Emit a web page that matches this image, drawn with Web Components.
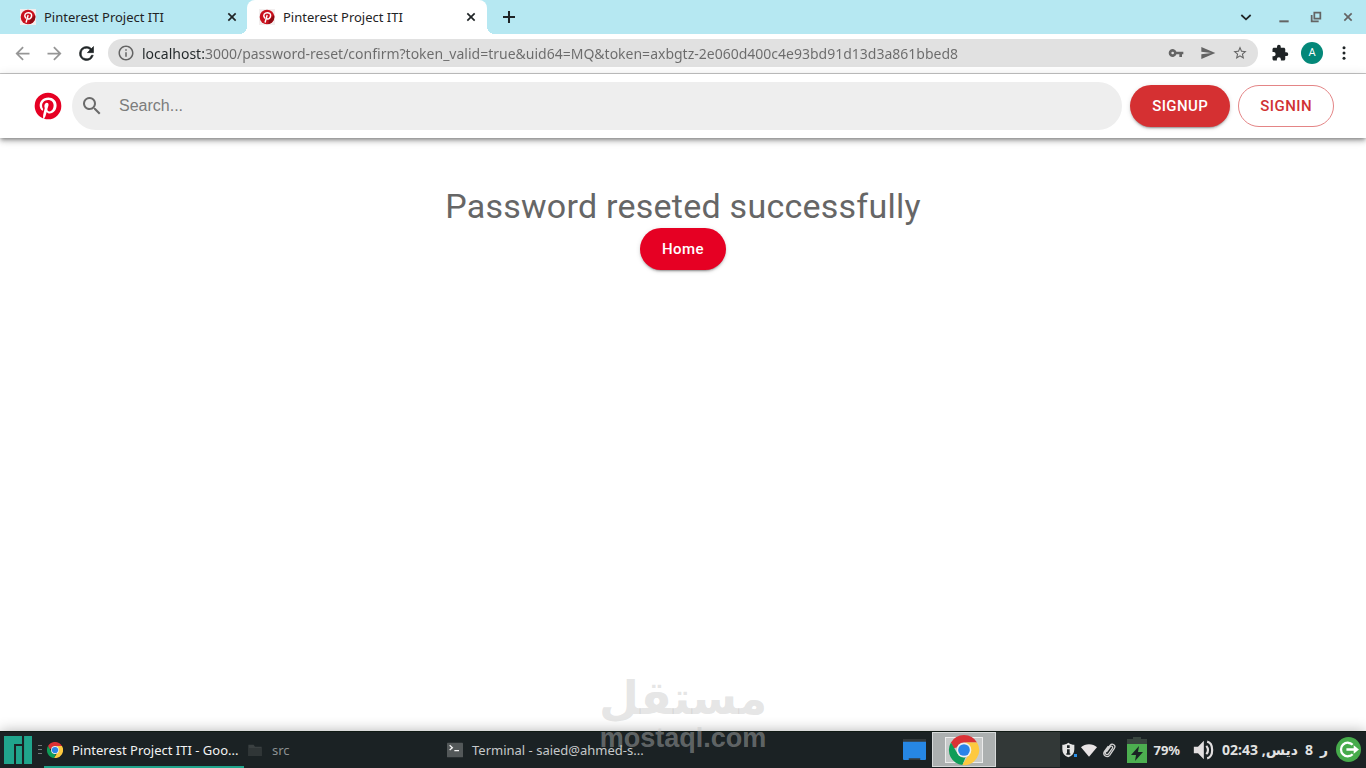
<!DOCTYPE html>
<html lang="en">
<head>
<meta charset="utf-8">
<title>Pinterest Project ITI</title>
<style>
html, body { height: 100%; margin: 0; }
body { font-family: "Noto Sans", "DejaVu Sans", sans-serif; font-size: 13px; color: #1f2426; background: #fff; overflow: hidden; }
</style>
</head>
<body>
<desktop-screen></desktop-screen>
<script>
const pinterestPath = 'M9.04 21.54c.96.29 1.93.46 2.96.46a10 10 0 0 0 10-10A10 10 0 0 0 12 2 10 10 0 0 0 2 12c0 4.25 2.67 7.9 6.44 9.34-.09-.78-.18-2.07 0-2.96l1.15-4.94s-.29-.58-.29-1.5c0-1.38.86-2.41 1.84-2.41.86 0 1.26.63 1.26 1.44 0 .86-.57 2.09-.86 3.27-.17.98.52 1.84 1.52 1.84 1.78 0 3.16-1.9 3.16-4.58 0-2.4-1.72-4.04-4.19-4.04-2.82 0-4.48 2.1-4.48 4.31 0 .86.28 1.73.74 2.3.09.06.09.14.06.29l-.29 1.09c0 .17-.11.23-.28.11-1.28-.56-2.02-2.38-2.02-3.85 0-3.16 2.24-6.03 6.56-6.03 3.44 0 6.12 2.47 6.12 5.75 0 3.44-2.13 6.2-5.18 6.2-.97 0-1.92-.52-2.26-1.13l-.67 2.37c-.23.86-.86 2.01-1.29 2.7v-.03z';
const chromeArt = '<path fill="#db3236" d="M3.3 7A10 10 0 0 1 20.7 7H12a5 5 0 0 0-4.6 3.1L5 11z"/><path fill="#0f9d58" d="M3.3 7l4.4 7.5A5 5 0 0 0 13 16.9L11 22A10 10 0 0 1 3.3 7z"/><path fill="#fdc940" d="M20.7 7A10 10 0 0 1 10.9 22l5.4-9A5 5 0 0 0 12 7z"/><circle cx="12" cy="12" r="4.9" fill="#f1f1f1"/><circle cx="12" cy="12" r="3.9" fill="#2a84e8"/>';
const icons = {
  pinterest: `<path fill="currentColor" d="${pinterestPath}"/>`,
  favicon: '<rect width="24" height="24" fill="#f2eeee"/><circle cx="12" cy="12" r="11" fill="#c9111d"/><path d="M14 22.8A11 11 0 0 0 22.6 9L15 17z" fill="#8f0b13"/><path d="M9.3 19.5l2.7-9.6M8.4 13.3C5.2 8.5 8.8 5.5 12.4 5.5c3.4 0 5.2 2.2 5 4.7-.3 3.2-2.7 5-4.7 4.7-1-.1-1.6-.6-1.9-1.2" fill="none" stroke="#fff" stroke-width="2.2" stroke-linecap="round"/>',
  x: '<path d="M6.5 6.5l11 11m0-11l-11 11" stroke="currentColor" stroke-width="2.5"/>',
  plus: '<path d="M12 4v16M4 12h16" stroke="currentColor" stroke-width="2.7"/>',
  chevron: '<path d="M5 9l7 6.5L19 9" fill="none" stroke="currentColor" stroke-width="2.6"/>',
  minimize: '<path d="M5 18.5h14" stroke="currentColor" stroke-width="3"/>',
  restore: '<path d="M9.5 5.5h9v9h-9zM5.5 9v9.500H16" fill="none" stroke="currentColor" stroke-width="2.6"/>',
  back: '<path d="M20 11H7.830l5.590-5.590L12 4l-8 8 8 8 1.410-1.410L7.830 13H20z" fill="currentColor"/>',
  forward: '<path d="M4 11h12.170l-5.590-5.590L12 4l8 8-8 8-1.410-1.410L16.170 13H4z" fill="currentColor"/>',
  reload: '<path d="M17.65 6.35A7.95 7.95 0 0 0 12 4a8 8 0 1 0 7.73 10h-2.080A6 6 0 1 1 12 6c1.660 0 3.140.690 4.220 1.780L13 11h7V4z" fill="currentColor" stroke="currentColor" stroke-width=".7"/>',
  info: '<path fill="currentColor" d="M11 7h2v2h-2zm0 4h2v6h-2zm1-9C6.480 2 2 6.480 2 12s4.480 10 10 10 10-4.480 10-10S17.520 2 12 2zm0 18c-4.410 0-8-3.590-8-8s3.590-8 8-8 8 3.590 8 8-3.590 8-8 8z"/>',
  key: '<path fill="currentColor" fill-rule="evenodd" d="M12.650 10A6 6 0 1 0 12.650 14H17v4h4v-4h2v-4zM7 14a2 2 0 1 1 0-4 2 2 0 0 1 0 4z"/>',
  send: '<path fill="currentColor" d="M2 21l21-9L2 3v7l15 2-15 2z"/>',
  star: '<path fill="currentColor" fill-rule="evenodd" d="M22 9.240l-7.190-.620L12 2 9.190 8.630 2 9.240l5.460 4.730L5.820 21 12 17.270 18.180 21l-1.630-7.030zM12 15.400l-3.760 2.270 1-4.280-3.320-2.880 4.380-.380L12 6.100l1.710 4.040 4.380.380-3.320 2.880 1 4.280z"/>',
  puzzle: '<path fill="currentColor" d="M20.500 11H19V7c0-1.100-.9-2-2-2h-4V3.500a2.500 2.500 0 0 0-5 0V5H4c-1.100 0-2 .9-2 2v3.800h1.500a2.700 2.700 0 0 1 0 5.400H2V20c0 1.100.9 2 2 2h3.800v-1.500a2.700 2.700 0 0 1 5.400 0V22H17c1.100 0 2-.9 2-2v-4h1.500a2.500 2.500 0 0 0 0-5z"/>',
  dots: '<g fill="currentColor"><circle cx="12" cy="5" r="2"/><circle cx="12" cy="12" r="2"/><circle cx="12" cy="19" r="2"/></g>',
  search: '<path fill="currentColor" d="M15.500 14h-.790l-.280-.270A6.500 6.500 0 1 0 13.730 14.430l.270.280v.790l5 4.990L20.490 19zm-6 0a4.500 4.500 0 1 1 0-9 4.500 4.500 0 0 1 0 9z"/>',
  manjaro: '<path fill="#20a58c" d="M0 0h15.400v6.900H8.600V24H0zM10.300 8.600h5.100V24h-5.100zM17.200 0H24v24h-6.800z"/>',
  chrome: chromeArt,
  folder: '<path fill="#3a4041" d="M2 4h8l2 3h10v14H2z"/><path fill="#303637" d="M2 9h20v12H2z"/>',
  terminal: '<rect y="1" width="24" height="22" rx="1" fill="#535859"/><path d="M4 5l4 3.500L4 12M11 13h7" fill="none" stroke="#f2f2f2" stroke-width="2"/>',
  screen: '<rect y="1" width="24" height="22" rx="1" fill="#2687e5"/><path fill="#343a3c" d="M0 1h24v3H0zM6 21h12v2H6z"/>',
  shield: '<path fill="#e4e4e4" d="M11 1c3 2 6 3 9 3v7c0 6-3 10-9 12-6-2-9-6-9-12V4c3 0 6-1 9-3z"/><path fill="#1b2224" d="M9 5h4v4H9zm0 6h4v6h1v2H8v-2h1z"/>',
  wifi: '<path fill="#e8e4e5" d="M12 22L0 8C6 2 18 2 24 8z"/>',
  clip: '<path d="M8 15l6-8c2-2 4.500 0 3 2.500L11 18c-2 2.500-6-.5-4-3.500L13.500 5C17 1 23 5 20 9.500L13 20c-4 4.500-11 0-8-5.500L11 6" fill="none" stroke="#d4d4d4" stroke-width="1.900"/>',
  battery: '<path fill="#39463f" d="M6 0h8v2h6v5H0V2h6z"/><path fill="#4caf50" d="M0 7h20v19H0z"/><path fill="#1b2224" d="M12 9l-8 9h5l-1 6 8-9h-5z"/>',
  volume: '<path fill="#e2dfe0" d="M1 8h5l7-7v22l-7-7H1z"/><path d="M16 7q4 5 0 10M17 2c8 2 8 18 0 20" fill="none" stroke="#e2dfe0" stroke-width="2.600"/>',
  logout: '<circle cx="12" cy="12" r="12" fill="#46ab4b"/><path d="M16 7.500A6.500 6.500 0 1 0 16 16.500M10 12h10" fill="none" stroke="#fff" stroke-width="2.200"/><path fill="#fff" d="M17 8l5 4-5 4z"/>'
};

function define(name, markup, setup) {
  const template = document.createElement('template');
  template.innerHTML = markup;
  customElements.define(name, class extends HTMLElement {
    constructor() {
      super();
      this.attachShadow({ mode: 'open' }).append(template.content.cloneNode(true));
    }
    connectedCallback() { if (setup) setup(this, this.shadowRoot); }
  });
}

/* Inline icon: name picks the drawing, view overrides the 24-unit box. */
define('ui-icon', `<style>
:host { display: block; flex: none; width: 16px; height: 16px; }
svg { display: block; width: 100%; height: 100%; }
</style><svg viewBox="0 0 24 24" aria-hidden="true"></svg>`, (host, root) => {
  const svg = root.querySelector('svg');
  if (host.getAttribute('view')) svg.setAttribute('viewBox', host.getAttribute('view'));
  svg.innerHTML = icons[host.getAttribute('name')] || '';
});

define('icon-button', `<style>
:host { display: block; flex: none; width: 32px; height: 28px; }
button { display: flex; align-items: center; justify-content: center; width: 100%; height: 100%; padding: 0; border: 0; border-radius: 14px; background: none; color: inherit; font: inherit; }
</style><button type="button"><slot></slot></button>`, (host, root) => {
  root.querySelector('button').setAttribute('aria-label', host.getAttribute('label'));
});

define('browser-tab', `<style>
:host { display: flex; align-items: center; position: relative; width: 240px; height: 34px; box-sizing: border-box; padding: 0 8px 0 12px; }
:host([active]) { background: #fff; border-radius: 8px 8px 0 0; margin-left: -1px; }
:host([active])::before, :host([active])::after { content: ""; position: absolute; bottom: 0; width: 8px; height: 8px; }
:host([active])::before { right: 100%; background: radial-gradient(circle at 0 0, transparent 8px, #fff 8px); }
:host([active])::after { left: 100%; background: radial-gradient(circle at 100% 0, transparent 8px, #fff 8px); }
.select { display: flex; flex: 1; align-items: center; gap: 8px; padding: 0; border: 0; background: none; color: inherit; font: inherit; line-height: 18px; }
icon-button { width: 16px; height: 16px; }
</style><button class="select" type="button"><ui-icon name="favicon"></ui-icon><slot></slot></button><icon-button label="Close tab"><ui-icon name="x"></ui-icon></icon-button>`);

define('tab-strip', `<style>
:host { display: flex; align-items: center; height: 34px; padding: 0 2px 0 8px; background: #b6e8f2; }
.new { margin-left: 6px; }
.new ui-icon { width: 18px; height: 18px; }
.spacer { flex: 1; }
.list { margin-right: 6px; }
.window { display: flex; color: #646464; }
</style>
<browser-tab>Pinterest Project ITI</browser-tab>
<browser-tab active>Pinterest Project ITI</browser-tab>
<icon-button class="new" label="New tab"><ui-icon name="plus"></ui-icon></icon-button>
<span class="spacer"></span>
<icon-button class="list" label="Search tabs"><ui-icon name="chevron"></ui-icon></icon-button>
<div class="window">
<icon-button label="Minimize"><ui-icon name="minimize"></ui-icon></icon-button>
<icon-button label="Restore"><ui-icon name="restore"></ui-icon></icon-button>
<icon-button label="Close"><ui-icon name="x"></ui-icon></icon-button>
</div>`);

define('browser-toolbar', `<style>
:host { display: flex; align-items: center; gap: 6px; height: 38px; padding: 0 6px 1px; background: #fff; border-bottom: 1px solid #c6c6c6; }
.group { display: flex; align-items: center; }
.off { color: #969696; }
ui-icon { width: 18px; height: 18px; }
.nav ui-icon { width: 21px; height: 21px; }
.box { display: flex; flex: 1; align-items: center; height: 28px; padding: 0 2px 0 9px; border-radius: 14px; background: #e1e1e1; color: #646464; }
.box icon-button ui-icon { width: 16px; height: 16px; }
input { flex: 1; min-width: 0; height: 28px; margin-left: 7px; padding: 0; border: 0; outline: 0; font: inherit; font-size: 14px; color: transparent; background: linear-gradient(90deg, #22282a 64px, #6b6b6b 64px); background-clip: text; -webkit-background-clip: text; }
.avatar { display: block; width: 22px; line-height: 22px; border-radius: 50%; background: #048879; color: #fff; font-family: Roboto, sans-serif; font-size: 11px; text-align: center; }
</style>
<div class="group nav">
<icon-button class="off" label="Back"><ui-icon name="back"></ui-icon></icon-button>
<icon-button class="off" label="Forward"><ui-icon name="forward"></ui-icon></icon-button>
<icon-button label="Reload"><ui-icon name="reload"></ui-icon></icon-button>
</div>
<div class="box">
<ui-icon name="info"></ui-icon>
<input type="text" aria-label="Address" spellcheck="false" value="localhost:3000/password-reset/confirm?token_valid=true&amp;uid64=MQ&amp;token=axbgtz-2e060d400c4e93bd91d13d3a861bbed8">
<icon-button label="Passwords"><ui-icon name="key"></ui-icon></icon-button>
<icon-button label="Share"><ui-icon name="send"></ui-icon></icon-button>
<icon-button label="Bookmark"><ui-icon name="star"></ui-icon></icon-button>
</div>
<div class="group">
<icon-button label="Extensions"><ui-icon name="puzzle"></ui-icon></icon-button>
<icon-button label="Profile"><span class="avatar">A</span></icon-button>
<icon-button label="Menu"><ui-icon name="dots"></ui-icon></icon-button>
</div>`);

define('pill-button', `<style>
:host { display: block; flex: none; }
button { display: block; box-sizing: border-box; height: 42px; padding: 0 22px; border: 0; border-radius: 21px; font: 500 15px/26px Roboto, sans-serif; letter-spacing: 0.02857em; color: #fff; background: #e60023; box-shadow: 0 3px 1px -2px rgba(0,0,0,.2), 0 2px 2px rgba(0,0,0,.14), 0 1px 5px rgba(0,0,0,.12); }
:host([variant=signup]) button { background: #d53032; }
:host([variant=outlined]) button { padding: 0 21px; border: 1px solid #e48586; background: #fff; color: #d03233; box-shadow: none; }
</style><button type="button"><slot></slot></button>`);

define('site-header', `<style>
:host { display: flex; align-items: center; gap: 8px; height: 64px; padding: 0 32px; position: relative; background: #fff; box-shadow: 0 2px 4px -1px rgba(0,0,0,.4), 0 4px 5px rgba(0,0,0,.14), 0 1px 10px rgba(0,0,0,.12); }
a { color: #e60023; }
a ui-icon { width: 32px; height: 32px; }
label { display: flex; flex: 1; align-items: center; gap: 15px; height: 48px; padding: 0 24px 0 8px; box-sizing: border-box; border-radius: 24px; background: #eee; color: #6b6b6b; }
label ui-icon { width: 24px; height: 24px; }
input { flex: 1; min-width: 0; padding: 0; border: 0; outline: 0; background: none; font: 16px "Liberation Sans", sans-serif; }
input::placeholder { color: #7c7c7c; }
</style>
<a href="#" aria-label="Pinterest home"><ui-icon name="pinterest"></ui-icon></a>
<label><ui-icon name="search"></ui-icon><input type="text" placeholder="Search..." aria-label="Search"></label>
<pill-button variant="signup">SIGNUP</pill-button>
<pill-button variant="outlined">SIGNIN</pill-button>`);

define('reset-message', `<style>
:host { display: flex; flex: 1; flex-direction: column; align-items: center; gap: 2px; padding-top: 48px; }
h1 { margin: 0; font: 400 34px/40px Roboto, sans-serif; letter-spacing: 0.00735em; color: #666; text-align: center; }
</style><h1>Password reseted successfully</h1><pill-button>Home</pill-button>`);

define('water-mark', `<style>
:host { display: flex; flex-direction: column; align-items: center; position: absolute; left: 0; right: 0; bottom: 16px; z-index: 2; pointer-events: none; color: rgba(194,194,194,.43); }
.ar { font: bold 46px/54px "DejaVu Sans", sans-serif; }
.en { font: bold 27px/27px "Liberation Sans", sans-serif; }
</style><span class="ar" lang="ar" dir="rtl">مستقل</span><span class="en">mostaql.com</span>`);

define('task-item', `<style>
:host { display: block; width: 200px; height: 37px; color: #c6c9ca; }
:host([active]) { color: #f2f2f2; }
:host([faded]) { color: #8c9091; }
button { display: flex; align-items: center; gap: 9px; width: 100%; height: 100%; box-sizing: border-box; padding: 2px 3px 0; border: 0; border-bottom: 2px solid transparent; background: none; color: inherit; font: inherit; white-space: nowrap; }
:host([active]) button { border-bottom-color: #20a58c; }
</style><button type="button"><slot name="icon"></slot><slot></slot></button>`);

define('task-bar', `<style>
:host { display: flex; align-items: center; height: 37px; padding: 0 5px 0 4px; position: relative; background: #1b2224; color: #e2e2e2; box-shadow: 0 0 14px rgba(0,0,0,.3), inset 0 1px #101a14; }
.start { width: 28px; height: 28px; }
.start ui-icon { width: 28px; height: 28px; }
.grip { width: 4px; height: 9px; margin: 0 2px 0 6px; background: repeating-linear-gradient(#737879 0 1px, transparent 1px 4px); }
.spacer { flex: 1; }
.screen { width: 36px; }
.screen ui-icon { width: 25px; height: 23px; }
.view { display: flex; align-items: center; justify-content: center; box-sizing: border-box; width: 64px; height: 35px; border: 1px solid #d6d9d9; background: #acb0b0; }
.thumb { display: flex; align-items: center; justify-content: center; box-sizing: border-box; width: 38px; height: 26px; border: 1px solid #ececec; background: #c8caca; }
.thumb ui-icon { width: 36px; height: 36px; }
.view.empty { border: 0; background: #323837; }
.tray { display: flex; align-items: center; margin-left: 1px; gap: 4px; }
.shield { position: relative; }
.shield::after { content: ""; position: absolute; right: 0; bottom: 1px; width: 3px; height: 3px; background: #2a90e8; }
.battery { width: 20px; height: 26px; margin-left: 6px; }
.level, .clock { font-size: 14px; font-weight: bold; line-height: 18px; }
.level { font-size: 13px; margin-left: 2px; }
.volume { width: 22px; height: 20px; margin-left: 8px; }
.clock { display: flex; gap: 7px; white-space: nowrap; margin: 0 4px; }
.leave { width: 25px; height: 26px; }
.leave ui-icon { width: 25px; height: 25px; }
</style>
<icon-button class="start" label="Applications"><ui-icon name="manjaro"></ui-icon></icon-button>
<span class="grip"></span>
<task-item active><ui-icon slot="icon" name="chrome" view="2 2 20 20"></ui-icon>Pinterest Project ITI - Goo...</task-item>
<task-item faded><ui-icon slot="icon" name="folder"></ui-icon>src</task-item>
<task-item><ui-icon slot="icon" name="terminal"></ui-icon>Terminal - saied@ahmed-s...</task-item>
<span class="spacer"></span>
<icon-button class="screen" label="Show desktop"><ui-icon name="screen"></ui-icon></icon-button>
<span class="view"><span class="thumb"><ui-icon name="chrome"></ui-icon></span></span>
<span class="view empty"></span>
<div class="tray">
<ui-icon class="shield" name="shield"></ui-icon>
<ui-icon name="wifi"></ui-icon>
<ui-icon name="clip"></ui-icon>
<ui-icon class="battery" name="battery" view="0 0 20 26"></ui-icon>
<span class="level">79%</span>
<ui-icon class="volume" name="volume"></ui-icon>
<time class="clock" lang="ar" dir="rtl"><span>ر</span><span>8</span><span>ديس, 02:43</span></time>
<icon-button class="leave" label="Log out"><ui-icon name="logout"></ui-icon></icon-button>
</div>`);

define('desktop-screen', `<style>
:host { display: flex; flex-direction: column; position: relative; min-height: 100vh; }
</style>
<tab-strip></tab-strip>
<browser-toolbar></browser-toolbar>
<site-header></site-header>
<reset-message></reset-message>
<task-bar></task-bar>
<water-mark></water-mark>`);
</script>
</body>
</html>
